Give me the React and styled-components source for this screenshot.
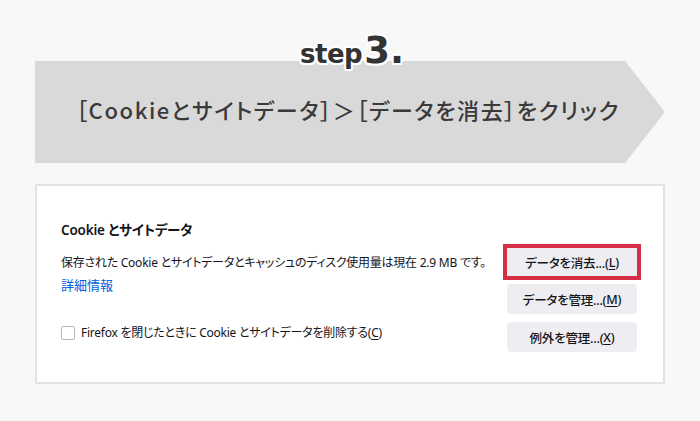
import styled, { createGlobalStyle } from "styled-components";

const GlobalStyle = createGlobalStyle`
  html, body {
    margin: 0;
    padding: 0;
    background: #f8f8f8;
  }
  body {
    width: 700px;
    height: 421px;
    overflow: hidden;
  }
`;

const Page = styled.div`
  display: flex;
  flex-direction: column;
  align-items: stretch;
  padding-top: 32px;
`;

const StepTitle = styled.div`
  position: relative;
  z-index: 1;
  align-self: center;
  display: flex;
  align-items: baseline;
  margin-bottom: -8px;
  margin-left: 4px;
  font-family: "DejaVu Sans", sans-serif;
  font-weight: bold;
  color: #333;
  line-height: 1;
  text-shadow: 2px 0 #fff, -2px 0 #fff, 0 2px #fff, 0 -2px #fff,
    1.5px 1.5px #fff, -1.5px 1.5px #fff, 1.5px -1.5px #fff, -1.5px -1.5px #fff;
`;

const StepWord = styled.span`
  font-size: 26px;
  letter-spacing: -0.5px;
`;

const StepNumber = styled.span`
  font-size: 37px;
  margin-left: 2px;
`;

const Banner = styled.div`
  margin: 0 35px;
  height: 102px;
  background: #d9d9d9;
  clip-path: polygon(0 0, 590px 0, 630px 51px, 590px 102px, 0 102px);
  display: flex;
  align-items: center;
  justify-content: center;
`;

const BannerText = styled.div`
  font-family: "Noto Sans CJK JP", sans-serif;
  font-feature-settings: "palt";
  font-size: 22px;
  font-weight: 500;
  color: #3a3a3a;
  letter-spacing: 1.6px;
  white-space: nowrap;
  margin-left: -4px;
  margin-top: -6px;
`;

const Card = styled.section`
  margin: 21px 35px 0;
  border: 2px solid #e3e3e3;
  background: #fff;
  padding: 34px 22px 30px 24px;
  font-family: "Segoe UI", "Noto Sans", "Noto Sans CJK JP", sans-serif;
  font-feature-settings: "palt";
  color: #15141a;
`;

const CardTitle = styled.h2`
  margin: 0;
  font-size: 13.5px;
  font-weight: 600;
  line-height: 20px;
  letter-spacing: -0.2px;
`;

const Body = styled.div`
  display: flex;
  justify-content: space-between;
  margin-top: 4px;
`;

const Info = styled.div`
  display: flex;
  flex-direction: column;
  padding-top: 9px;
  font-size: 12px;
  line-height: 20px;
  letter-spacing: -0.25px;
  white-space: nowrap;
`;

const Description = styled.p`
  margin: 0;
`;

const MoreLink = styled.a`
  margin-top: 2px;
  color: #0061e0;
  font-size: 13px;
  letter-spacing: 0;
  text-decoration: none;
`;

const CheckRow = styled.label`
  display: flex;
  align-items: center;
  gap: 6px;
  margin-top: 28px;
`;

const Box = styled.span`
  width: 12px;
  height: 12px;
  border: 1px solid #b4b4bc;
  border-radius: 2px;
  background: #fff;
`;

const ButtonStack = styled.div`
  display: flex;
  flex-direction: column;
  align-items: center;
`;

const Highlight = styled.div`
  border: 4px solid #d62f45;
`;

const Button = styled.button`
  width: 130px;
  height: ${(p) => (p.$framed ? "28px" : "30px")};
  margin-top: ${(p) => p.$mt || 0}px;
  border: none;
  border-radius: ${(p) => (p.$framed ? "0" : "4px")};
  background: #eeeef2;
  font-family: "Segoe UI", "Noto Sans", "Noto Sans CJK JP", sans-serif;
  font-feature-settings: "palt";
  font-size: 12.5px;
  font-weight: 500;
  letter-spacing: -0.2px;
  color: #15141a;
  display: flex;
  align-items: center;
  justify-content: center;
  padding: 0;
`;

const Key = styled.u`
  text-underline-offset: 2px;
`;

export default function App() {
  return (
    <>
      <GlobalStyle />
      <Page>
        <StepTitle>
          <StepWord>step</StepWord>
          <StepNumber>3.</StepNumber>
        </StepTitle>
        <Banner>
          <BannerText>［Cookieとサイトデータ］＞［データを消去］をクリック</BannerText>
        </Banner>
        <Card>
          <CardTitle>Cookie とサイトデータ</CardTitle>
          <Body>
            <Info>
              <Description>
                保存された Cookie とサイトデータとキャッシュのディスク使用量は現在 2.9 MB です。
              </Description>
              <MoreLink href="#">詳細情報</MoreLink>
              <CheckRow>
                <Box />
                <span>
                  Firefox を閉じたときに Cookie とサイトデータを削除する(<Key>C</Key>)
                </span>
              </CheckRow>
            </Info>
            <ButtonStack>
              <Highlight>
                <Button $framed>
                  データを消去...(<Key>L</Key>)
                </Button>
              </Highlight>
              <Button $mt={4}>
                データを管理...(<Key>M</Key>)
              </Button>
              <Button $mt={8}>
                例外を管理...(<Key>X</Key>)
              </Button>
            </ButtonStack>
          </Body>
        </Card>
      </Page>
    </>
  );
}
